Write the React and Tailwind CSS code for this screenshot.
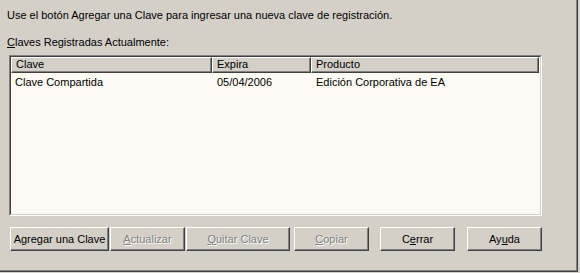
import React from "react";

const font = { fontFamily: '"Liberation Sans", Arial, sans-serif' };

// mnemonic letter, underlined like a Win32 dialog accelerator
const Mn = ({ children }) => <span className="underline underline-offset-1">{children}</span>;

const Btn = ({ width, disabled, children }) => (
  <button
    type="button"
    className={`${width} h-[24px] shrink-0 bg-[#d4d0c8] border border-t-white border-l-white border-r-[#404040] border-b-[#404040] shadow-[inset_-1px_-1px_0_#808080] text-[11px] leading-none flex items-center justify-center ${
      disabled ? "text-[#808080] [text-shadow:1px_1px_0_#ffffff]" : "text-black"
    }`}
  >
    {children}
  </button>
);

const HeaderCell = ({ width, children }) => (
  <div
    className={`${width} h-[16px] shrink-0 bg-[#d4d0c8] border-t border-l border-t-white border-l-white border-r border-b border-r-[#404040] border-b-[#404040] shadow-[inset_-1px_-1px_0_#808080] pl-[4px] text-[11px] leading-[13px] text-black`}
  >
    {children}
  </div>
);

export default function App() {
  return (
    <div className="w-[580px] h-[273px] bg-[#d4d0c8] overflow-hidden" style={font}>
      <div className="w-[578px] h-[272px] border-r border-b border-r-[#404040] border-b-[#404040] shadow-[inset_-1px_-1px_0_#808080] flex flex-col">
        <p className="mt-[9px] ml-[7px] text-[11px] leading-[13px] text-black">
          Use el botón Agregar una Clave para ingresar una nueva clave de registración.
        </p>
        <p className="mt-[14px] ml-[7px] text-[11px] leading-[13px] text-black">
          <Mn>C</Mn>laves Registradas Actualmente:
        </p>

        {/* list view */}
        <div className="ml-[9px] mt-[6px] w-[533px] h-[161px] border border-t-[#808080] border-l-[#808080] border-r-white border-b-white">
          <div className="h-full w-full border border-t-[#404040] border-l-[#404040] border-r-[#d4d0c8] border-b-[#d4d0c8] bg-[#fdfaf4] flex flex-col">
            <div className="flex">
              <HeaderCell width="w-[201px]">Clave</HeaderCell>
              <HeaderCell width="w-[99px]">Expira</HeaderCell>
              <HeaderCell width="w-[228px]">Producto</HeaderCell>
            </div>
            <div className="flex h-[16px] mt-[3px] text-[11px] leading-[13px] text-black">
              <div className="w-[201px] pl-[4px]">Clave Compartida</div>
              <div className="w-[99px] pl-[5px]">05/04/2006</div>
              <div className="pl-[5px]">Edición Corporativa de EA</div>
            </div>
          </div>
        </div>

        {/* buttons */}
        <div className="flex ml-[10px] mt-[11px]">
          <Btn width="w-[99px]">Agregar una Clave</Btn>
          <div className="w-[1px]" />
          <Btn width="w-[75px]" disabled>
            <span><Mn>A</Mn>ctualizar</span>
          </Btn>
          <div className="w-[1px]" />
          <Btn width="w-[104px]" disabled>
            <span><Mn>Q</Mn>uitar Clave</span>
          </Btn>
          <div className="w-[4px]" />
          <Btn width="w-[75px]" disabled>
            <span><Mn>C</Mn>opiar</span>
          </Btn>
          <div className="w-[11px]" />
          <Btn width="w-[75px]">
            <span>C<Mn>e</Mn>rrar</span>
          </Btn>
          <div className="w-[12px]" />
          <Btn width="w-[75px]">
            <span>Ay<Mn>u</Mn>da</span>
          </Btn>
        </div>
      </div>
    </div>
  );
}
